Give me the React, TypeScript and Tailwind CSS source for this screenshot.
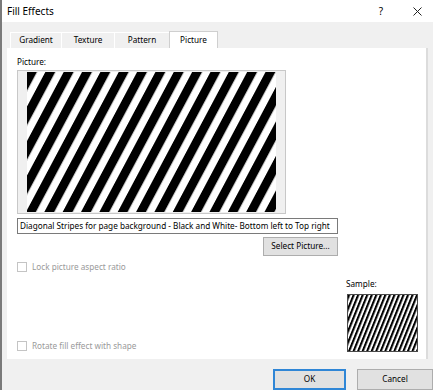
import React from "react";

function Stripes({ w, h, period, angle, black, id }: { w: number; h: number; period: number; angle: number; black: number; id: string }) {
  return (
    <svg width={w} height={h} className="block">
      <defs>
        <pattern id={id} width={period} height={40} patternUnits="userSpaceOnUse" patternTransform={`rotate(${angle})`}>
          <rect width={black} height={40} fill="#000" />
        </pattern>
      </defs>
      <rect width={w} height={h} fill="#fff" />
      <rect width={w} height={h} fill={`url(#${id})`} />
    </svg>
  );
}

function Check({ label }: { label: string }) {
  return (
    <div className="flex items-center h-[10px]">
      <div className="w-[10px] h-[10px] border border-[#c4c4c4] bg-white" />
      <span className="ml-[5px] text-[8.2px] leading-[12px] text-[#9a9a9a]">{label}</span>
    </div>
  );
}

export default function App() {
  const tabs = ["Gradient", "Texture", "Pattern"];
  return (
    <div
      className="w-[433px] h-[390px] bg-[#f0f0f0] border-l-2 border-[#7a7a7a] flex flex-col overflow-hidden text-black"
      style={{ fontFamily: '"Noto Sans", "Open Sans", sans-serif' }}
    >
      {/* title bar */}
      <div className="h-[22px] bg-white flex items-center pl-[5px] shrink-0">
        <span className="text-[10px] leading-none">Fill Effects</span>
        <span className="ml-auto text-[10px] leading-none mr-[30px]">?</span>
        <svg width="9" height="9" viewBox="0 0 9 9" className="mr-[11px]">
          <path d="M0.5 0.5L8.5 8.5M8.5 0.5L0.5 8.5" stroke="#222" strokeWidth="1" />
        </svg>
      </div>

      {/* tabs */}
      <div className="h-[26px] flex items-end pl-[8px] shrink-0">
        {tabs.map((t, i) => (
          <div
            key={t}
            className={`h-[16px] flex items-center justify-center border-t border-l border-white text-[8.2px] leading-none ${
              i === 0 ? "w-[51px]" : i === 1 ? "w-[53px]" : "w-[55px]"
            }`}
          >
            {t}
          </div>
        ))}
        <div className="h-[17px] w-[49px] flex items-center justify-center bg-white border border-b-0 border-[#cfcfcf] text-[8.2px] leading-none">
          Picture
        </div>
      </div>

      {/* panel */}
      <div className="ml-[5px] w-[421px] h-[311px] bg-white border-r-2 border-[#dcdcdc] flex flex-col pl-[10px] pt-[8px] shrink-0">
        <div className="text-[8.2px] leading-[12px] h-[12px]">Picture:</div>
        <div className="mt-[2px] w-[269px] h-[144px] border border-[#c8c8c8] bg-[#f0f0f0] pl-[9px] pt-[1px]">
          <Stripes id="big" w={249} h={140} period={16.2} angle={28} black={8.8} />
        </div>
        <div className="mt-[4px] w-[321px] h-[16px] border border-[#7a7a7a] flex items-center pl-[2px] overflow-hidden whitespace-nowrap">
          <span className="text-[8.2px] leading-none">
            Diagonal Stripes for page background - Black and White- Bottom left to Top right
          </span>
        </div>
        <div className="w-[321px] flex justify-end mt-[3px]">
          <div className="w-[75px] h-[19px] bg-[#e1e1e1] border border-[#adadad] flex items-center justify-center text-[8.2px] leading-none">
            Select Picture...
          </div>
        </div>
        <div className="mt-[6px]">
          <Check label="Lock picture aspect ratio" />
        </div>
        <div className="mt-[6px] flex items-end justify-between pr-[8px]">
          <div className="mb-[1px]">
            <Check label="Rotate fill effect with shape" />
          </div>
          <div className="flex flex-col">
            <div className="text-[8.2px] leading-[12px] h-[12px]">Sample:</div>
            <div className="mt-[4px] ml-[1px] w-[71px] h-[58px] border border-[#4a4a4a]">
              <Stripes id="small" w={69} h={56} period={4.2} angle={22} black={2.1} />
            </div>
          </div>
        </div>
      </div>

      {/* buttons */}
      <div className="mt-[10px] flex justify-end gap-[11px]">
        <div className="w-[73px] h-[21px] bg-[#e1e1e1] border-2 border-[#2f86d6] flex items-center justify-center text-[8.2px] leading-none">
          OK
        </div>
        <div className="w-[76px] h-[21px] bg-[#e1e1e1] border border-[#adadad] flex items-center justify-center text-[8.2px] leading-none">
          Cancel
        </div>
      </div>
    </div>
  );
}
